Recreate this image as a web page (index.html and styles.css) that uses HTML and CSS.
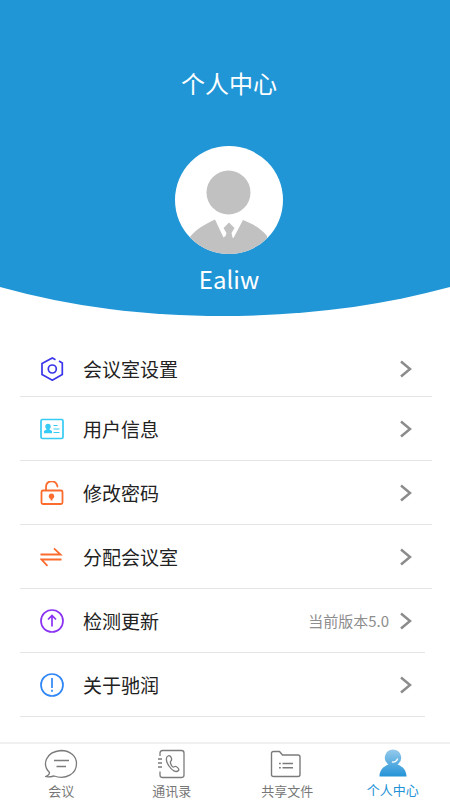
FILE: index.html
```html
<!DOCTYPE html>
<html lang="zh-CN">
<head>
<meta charset="utf-8">
<meta name="viewport" content="width=device-width, initial-scale=1">
<title>个人中心</title>
<link rel="stylesheet" href="styles.css">
</head>
<body>
<header class="profile">
  <svg class="profile-bg" viewBox="0 0 450 316" preserveAspectRatio="none" aria-hidden="true">
    <path d="M0 0H450V287C377 307 300 316 222 316C145 316 72 307 0 287Z" fill="#2196d6"/>
  </svg>
  <h1 class="profile-title">个人中心</h1>
  <svg class="avatar" viewBox="0 0 108 108" aria-hidden="true">
    <defs><clipPath id="disc"><circle cx="54" cy="54" r="54"/></clipPath></defs>
    <circle cx="54" cy="54" r="54" fill="#fff"/>
    <g clip-path="url(#disc)" fill="#c1c1c1">
      <circle cx="53.500" cy="46.500" r="22"/>
      <path d="M40 73.500L48.500 91.500L50.500 90L51.500 87L48.500 82L54 76.500L59.500 82L56.500 87L57.500 91.500L58.500 92L68 74C78 78 87 83 92 90V108H15V91C20 84 30 78 40 73.500Z"/>
    </g>
  </svg>
  <p class="profile-name">Ealiw</p>
</header>

<main class="menu">
  <a class="row row-first" href="#room-settings">
    <svg class="row-icon" viewBox="0 0 24 24" fill="none" stroke="#3a35ea" stroke-width="1.700"><path d="M15.500 2.700L12.300 1L2 6.500V17.500L12.300 23.200L22.300 17.500V6L19 4"/><circle cx="12.300" cy="12" r="4"/></svg>
    <span class="row-label">会议室设置</span>
    <svg class="chevron" viewBox="0 0 12 18"><path d="M1 1.500L10 9L1 16.500"/></svg>
  </a>
  <a class="row" href="#user">
    <svg class="row-icon" viewBox="0 0 24 24" fill="none" stroke="#36cbf5" stroke-width="1.700"><rect x="1" y="2.500" width="22" height="19" rx="1.500"/><path d="M13.500 8.500H17.500M13.500 12H19.500M13.500 15.500H19.500" stroke-width="1.200"/><circle cx="8" cy="9.500" r="2.700" fill="#36cbf5" stroke="none"/><path d="M6.500 10H9.500V12.500L12 14V16.300H4V14L6.500 12.500Z" fill="#36cbf5" stroke="none"/></svg>
    <span class="row-label">用户信息</span>
    <svg class="chevron" viewBox="0 0 12 18"><path d="M1 1.500L10 9L1 16.500"/></svg>
  </a>
  <a class="row" href="#password">
    <svg class="row-icon" viewBox="0 0 24 24" fill="none" stroke="#fb6c2e" stroke-width="1.800"><rect x="1.500" y="9.500" width="21" height="13.500" rx="1.500"/><path d="M6 9V6.500C6 -1.500 16 -1.500 17.500 5.500" stroke-linecap="round"/><circle cx="11.500" cy="15.200" r="2.700" fill="#fb6c2e" stroke="none"/><path d="M11.500 16V19.500"/></svg>
    <span class="row-label">修改密码</span>
    <svg class="chevron" viewBox="0 0 12 18"><path d="M1 1.500L10 9L1 16.500"/></svg>
  </a>
  <a class="row" href="#assign">
    <svg class="row-icon" viewBox="0 0 24 24" fill="none" stroke="#fb6c2e" stroke-width="1.800"><path d="M0.500 9.500H20.500L14 3.300M21.500 14.500H1.500L7.500 20.800"/></svg>
    <span class="row-label">分配会议室</span>
    <svg class="chevron" viewBox="0 0 12 18"><path d="M1 1.500L10 9L1 16.500"/></svg>
  </a>
  <a class="row row-short" href="#update">
    <svg class="row-icon" viewBox="0 0 24 24" fill="none" stroke="#8a32f4" stroke-width="1.700"><circle cx="12" cy="12" r="11"/><path d="M12 17.500V7M8 10.500L12 6.500L16 10.500"/></svg>
    <span class="row-label">检测更新</span>
    <span class="row-note">当前版本5.0</span>
    <svg class="chevron" viewBox="0 0 12 18"><path d="M1 1.500L10 9L1 16.500"/></svg>
  </a>
  <a class="row row-short" href="#about">
    <svg class="row-icon" viewBox="0 0 24 24" fill="none" stroke="#2f86f6" stroke-width="1.700"><circle cx="12" cy="12" r="11"/><path d="M12 5V15M12 16.800V18.800"/></svg>
    <span class="row-label">关于驰润</span>
    <svg class="chevron" viewBox="0 0 12 18"><path d="M1 1.500L10 9L1 16.500"/></svg>
  </a>
</main>

<nav class="tabs">
  <a class="tab" href="#meeting">
    <svg class="tab-icon" viewBox="0 0 34 30" fill="none" stroke="#7b7b7b" stroke-width="1.300"><path d="M5.500 23.500C-2 16 1 3 17 1.500C27 1.500 32.500 8 32.500 14.500C32.500 25 22 31 10 27C6 28 3.500 28.300 1.500 27.500C4 26.700 5.500 25.500 5.500 23.500Z" stroke-linejoin="round"/><path d="M10 11.500H25M12.500 17.500H22" stroke-width="1.500"/></svg>
    <span>会议</span>
  </a>
  <a class="tab" href="#contacts">
    <svg class="tab-icon" viewBox="0 0 34 30" fill="none" stroke="#7b7b7b" stroke-width="1.300"><path d="M5 7V4Q5 1.500 7.500 1.500H26.500Q29 1.500 29 4V26Q29 28.500 26.500 28.500H7.500Q5 28.500 5 26V22.500M3 10H7M3 14H7M3 18H7"/><path d="M13 7C10.500 8 11 13 14 17C17 21.500 21 24 23.500 21.500C24.500 20.500 23 18.500 21 17.500C19.500 17 19 18.500 18 18C16.500 17 15 14 15.500 12.500C16 12 17 11.500 16.500 9.500C16 7.500 14.500 6 13 7Z"/></svg>
    <span>通讯录</span>
  </a>
  <a class="tab" href="#files">
    <svg class="tab-icon" viewBox="0 0 34 30" fill="none" stroke="#7b7b7b" stroke-width="1.400"><path d="M1.500 25.500V4.500Q1.500 2.500 3.500 2.500H9.500L12.500 6H28Q30 6 30 8V25.500Q30 27.500 28 27.500H3.500Q1.500 27.500 1.500 25.500Z"/><path d="M9 14.500H10.800M12.500 14.500H23M9 18.800H10.800M12.500 18.800H23"/></svg>
    <span>共享文件</span>
  </a>
  <a class="tab tab-active" href="#me" aria-current="page">
    <svg class="tab-icon" viewBox="0 0 34 30"><defs><linearGradient id="person" x1="0" y1="1" x2="0" y2="28" gradientUnits="userSpaceOnUse"><stop offset="0" stop-color="#93c9eb"/><stop offset="1" stop-color="#2192d6"/></linearGradient></defs><path d="M17 0.500A8.200 8.200 0 0 1 21.500 15.500C27 17.500 30.500 21.500 30.500 27.500H3.500C3.500 21.500 7 17.500 12.500 15.500A8.200 8.200 0 0 1 17 0.500Z" fill="url(#person)"/><path d="M16.500 13Q20 13.500 21.500 10" fill="none" stroke="#fff" stroke-width="1.300" stroke-linecap="round"/></svg>
    <span>个人中心</span>
  </a>
</nav>
</body>
</html>
```
FILE: styles.css
```css
* {
  box-sizing: border-box;
}

body {
  margin: 0;
  min-height: 100vh;
  display: flex;
  flex-direction: column;
  background: #fff;
  color: #222;
  font-family: "Noto Sans CJK SC", "Noto Sans", sans-serif;
}

a {
  color: inherit;
  text-decoration: none;
}

.profile {
  position: relative;
  display: flex;
  flex-direction: column;
  align-items: center;
  padding: 65px 0 20px 8px;
  color: #fff;
}

.profile-bg {
  position: absolute;
  inset: 0;
  z-index: -1;
  width: 100%;
  height: 100%;
}

.profile-title {
  margin: 0 0 45px;
  font-size: 24px;
  font-weight: 400;
  line-height: 36px;
}

.avatar {
  width: 108px;
  height: 108px;
}

.profile-name {
  margin: 8px 0 0;
  font-size: 24px;
  line-height: 34px;
}

.menu {
  padding: 26px 18px 0 20px;
}

.row {
  display: flex;
  align-items: center;
  height: 64px;
  padding: 0 20px;
  border-bottom: 1px solid #e4e4e4;
}

.row-first {
  height: 55px;
}

.row-short {
  margin-right: 7px;
  padding-right: 13px;
}

.row-icon {
  flex: none;
  width: 24px;
  height: 24px;
  margin-right: 19px;
}

.row-label {
  flex: 1;
  font-size: 19px;
  line-height: 28px;
}

.row-note {
  margin-right: 11px;
  color: #8e8e8e;
  font-size: 15px;
  line-height: 22px;
}

.chevron {
  flex: none;
  width: 12px;
  height: 18px;
  fill: none;
  stroke: #8c8c8c;
  stroke-width: 2.5;
}

.tabs {
  display: grid;
  grid-template-columns: 11fr 11fr 12fr 9fr;
  margin-top: auto;
  padding: 5px 12px 0 6px;
  border-top: 2px solid #f0f0f0;
}

.tab {
  display: flex;
  flex-direction: column;
  align-items: center;
  gap: 3px;
  color: #777;
  font-size: 13px;
  line-height: 18px;
  white-space: nowrap;
}

.tab-icon {
  width: 34px;
  height: 30px;
}

.tab-active {
  gap: 2px;
  color: #2192d6;
}
```
